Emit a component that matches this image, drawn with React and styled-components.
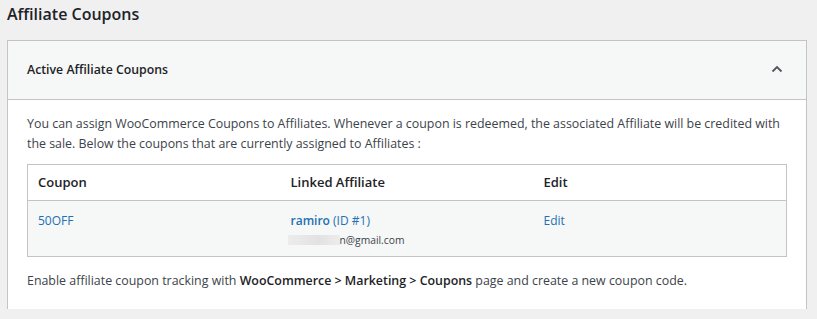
import React from 'react';
import styled, { createGlobalStyle } from 'styled-components';

const GlobalStyle = createGlobalStyle`
  body {
    margin: 0;
    background: #f0f0f1;
    font-family: "Open Sans", "Noto Sans", sans-serif;
    color: #3c434a;
  }
`;

const Page = styled.div`
  padding: 0 10px 0 7px;
`;

const Title = styled.h1`
  margin: 0;
  height: 40px;
  font-size: 16px;
  font-weight: 600;
  line-height: 28px;
  color: #1d2327;
`;

const Panel = styled.div`
  background: #fff;
  border: 1px solid #c3c4c7;
  border-bottom: none;
  height: 268px;
`;

const PanelHeader = styled.div`
  display: flex;
  align-items: center;
  justify-content: space-between;
  height: 59px;
  padding: 0 23px 2px 19px;
  box-sizing: border-box;
  background: #f6f7f7;
  border-bottom: 1px solid #c3c4c7;
`;

const PanelTitle = styled.h2`
  margin: 0;
  font-size: 12.3px;
  font-weight: 600;
  color: #1d2327;
`;

const PanelBody = styled.div`
  padding: 14px 19px 0;
`;

const Text = styled.p`
  margin: 0 0 ${(p) => p.$gap || 0}px;
  font-size: 12.4px;
  line-height: 19.5px;
  color: #3c434a;

  strong {
    font-weight: 600;
    color: #1d2327;
  }
`;

const Table = styled.table`
  width: 100%;
  border-collapse: collapse;
  border: 1px solid #c3c4c7;
  table-layout: fixed;
  margin-bottom: 14px;
`;

const Th = styled.th`
  text-align: left;
  padding: 8px 10px;
  font-size: 13px;
  line-height: 19px;
  font-weight: 600;
  color: #1d2327;
  border-bottom: 1px solid #c3c4c7;
`;

const Td = styled.td`
  vertical-align: top;
  padding: 10px 10px 7px;
  background: #f6f7f7;
  font-size: 12px;
  line-height: 20px;
`;

const Link = styled.a`
  color: #2271b1;
  text-decoration: none;
  font-weight: ${(p) => (p.$strong ? 600 : 400)};
`;

const AffiliateId = styled.span`
  color: #2271b1;
`;

const Email = styled.div`
  display: flex;
  align-items: center;
  font-size: 10.3px;
  line-height: 18px;
  color: #3c434a;
  margin-left: -3px;
`;

const Blur = styled.span`
  display: inline-block;
  width: 52px;
  height: 10px;
  background: linear-gradient(90deg, #ececec, #e2e2e2 60%, #ececec);
`;

const Chevron = () => (
  <svg width="12" height="8" viewBox="0 0 12 8">
    <path d="M1.5 6.5 L6 2 L10.5 6.5" fill="none" stroke="#50575e" strokeWidth="1.8" />
  </svg>
);

export default function App() {
  return (
    <Page>
      <GlobalStyle />
      <Title>Affiliate Coupons</Title>
      <Panel>
        <PanelHeader>
          <PanelTitle>Active Affiliate Coupons</PanelTitle>
          <Chevron />
        </PanelHeader>
        <PanelBody>
          <Text $gap={11}>
            You can assign WooCommerce Coupons to Affiliates. Whenever a coupon is redeemed, the
            associated Affiliate will be credited with the sale. Below the coupons that are currently
            assigned to Affiliates :
          </Text>
          <Table>
            <thead>
              <tr>
                <Th>Coupon</Th>
                <Th>Linked Affiliate</Th>
                <Th>Edit</Th>
              </tr>
            </thead>
            <tbody>
              <tr>
                <Td>
                  <Link href="#">50OFF</Link>
                </Td>
                <Td>
                  <Link href="#" $strong>ramiro</Link> <AffiliateId>(ID #1)</AffiliateId>
                  <Email>
                    <Blur />
                    n@gmail.com
                  </Email>
                </Td>
                <Td>
                  <Link href="#">Edit</Link>
                </Td>
              </tr>
            </tbody>
          </Table>
          <Text>
            Enable affiliate coupon tracking with <strong>WooCommerce &gt; Marketing &gt; Coupons</strong>{' '}
            page and create a new coupon code.
          </Text>
        </PanelBody>
      </Panel>
    </Page>
  );
}
